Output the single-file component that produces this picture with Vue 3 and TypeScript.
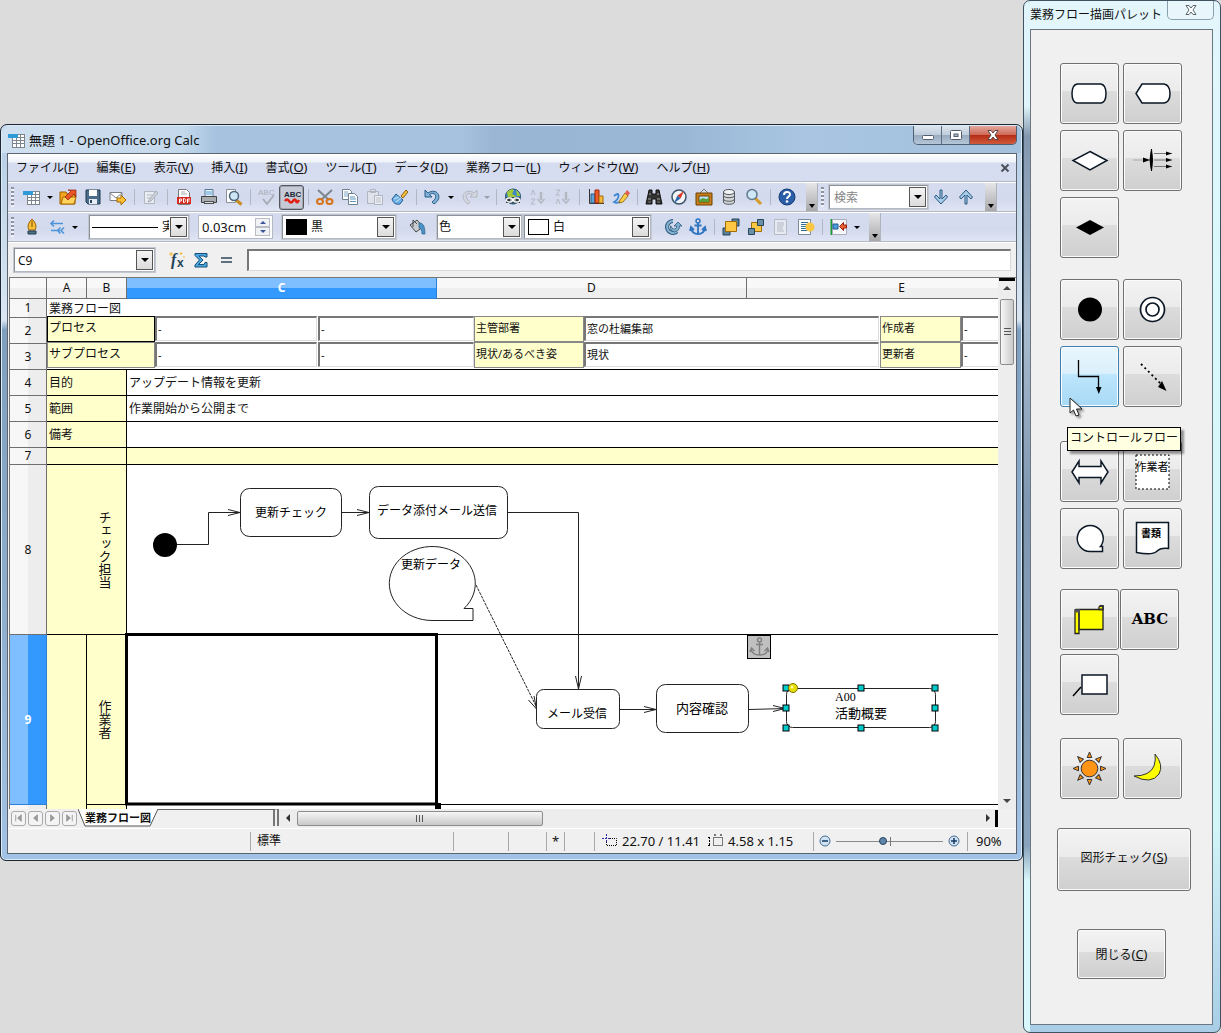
<script setup lang="ts">
import { ref } from 'vue'

interface Tool {
  kind: 'btn' | 'sep' | 'arrow'
  icon?: string
  label?: string
  pressed?: boolean
  disabled?: boolean
}
interface Shape {
  icon: string
  label: string
  hot?: boolean
}

const menus = [
  ['ファイル', 'F'], ['編集', 'E'], ['表示', 'V'], ['挿入', 'I'], ['書式', 'O'],
  ['ツール', 'T'], ['データ', 'D'], ['業務フロー', 'L'], ['ウィンドウ', 'W'], ['ヘルプ', 'H'],
]

const btn = (icon: string, label: string, extra: Partial<Tool> = {}): Tool => ({ kind: 'btn', icon, label, ...extra })
const sep: Tool = { kind: 'sep' }
const arrow = (disabled = false): Tool => ({ kind: 'arrow', label: 'その他', disabled })

const standard: Tool[] = [
  btn('sheet', '新規'), arrow(), btn('open', '開く'), btn('save', '保存'), btn('mail', 'メール送信'), sep,
  btn('edit', '編集', { disabled: true }), sep,
  btn('pdf', 'PDF'), btn('print', '印刷'), btn('preview', 'プレビュー'), sep,
  btn('spell', 'スペルチェック', { disabled: true }), btn('autospell', '自動スペルチェック', { pressed: true }), sep,
  btn('cut', '切り取り'), btn('copy', 'コピー'), btn('paste', '貼り付け', { disabled: true }), btn('brush', '書式の貼り付け'), sep,
  btn('undo', '元に戻す'), arrow(), btn('redo', 'やり直し', { disabled: true }), arrow(true), sep,
  btn('globe', 'ハイパーリンク'), btn('sortAsc', '昇順', { disabled: true }), btn('sortDesc', '降順', { disabled: true }), sep,
  btn('chart', 'グラフ'), btn('draw', '図形描画'), sep,
  btn('binoculars', '検索と置換'), btn('compass', 'ナビゲータ'), btn('gallery', 'ギャラリー'), btn('database', 'データソース'), btn('zoom', 'ズーム'), sep,
  btn('help', 'ヘルプ'),
]
const objectTools: Tool[] = [
  btn('rotate', '回転'), btn('anchor', 'アンカー'), sep,
  btn('front', '最前面へ'), btn('back', '最背面へ'), btn('toFore', '前景へ', { disabled: true }), btn('toBack', '背景へ'), sep,
  btn('align', '配置'), arrow(),
]

const icons: Record<string, string> = {
  sheet: '<path d="M1 3h16v14H4V7H1z" fill="#fff"/><path d="M4.500 6v11M8.500 3v14M12.500 3v14M16.500 3v14M4 6.500h13M4 9.500h13M4 12.500h13M4 16.500h13M8 3.500h9" stroke="#7d858c" fill="none"/><path d="M0 3h10v4H0z" fill="#2e9bd8"/>',
  open: '<path d="M1 4h6l1 2h8v10H1z" fill="#f2a61e" stroke="#9a5c00"/><path d="M4 9h13l-2 7H2z" fill="#ffd35c" stroke="#a86800"/><path d="M6 9l6-6-3-1h8v7l-2-3-6 6z" fill="#e8562a" stroke="#8c1d0c" stroke-width=".7"/>',
  save: '<path d="M2 2h14v14H4l-2-2z" fill="#4b6d8c" stroke="#20384e"/><path d="M5 2h8v6H5z" fill="#fff"/><path d="M5 11h8v5H5z" fill="#e7edf2"/><path d="M6 12h2v3H6z" fill="#29455e"/>',
  mail: '<path d="M1 4.500h12v8H1z" fill="#fff" stroke="#7b8088"/><path d="M1 5l6 5 6-5" fill="none" stroke="#7b8088"/><path d="M8 10h4V7l5 5-5 5v-3H8z" fill="#fbc034" stroke="#a56b00"/>',
  edit: '<path d="M2.500 3.500h10v12h-10zM5 7h5M5 10h5" fill="#e9ecf3" stroke="#b1b6c0"/><path d="M7 12l7-9 2 2-7 8-3 1z" fill="#cfd3dc" stroke="#aab0ba"/>',
  pdf: '<path d="M3.500 1.500h8l3 3v12h-11z" fill="#fff" stroke="#777"/><path d="M6 4h4M6 6h6" stroke="#aaa"/><path d="M2 9h14v7H2z" fill="#d5281e"/><path d="M4.500 15v-4h2v2h-2M8.500 10.500v4c3 0 3-4 0-4M12.500 15v-4h2.500M12.500 13h2" stroke="#fff" fill="none"/>',
  print: '<path d="M5 1.500h8v7H5z" fill="#e9f2fa" stroke="#567a9a"/><path d="M6 4h6M6 6h6" stroke="#5ba2d8"/><path d="M1.500 8.500h15v6h-15z" fill="#a9adb0" stroke="#3f4346"/><path d="M4 13h10v3H4z" fill="#4a4e50"/><path d="M5 14.500h8" stroke="#dfe1e2"/>',
  preview: '<path d="M1.500 1.500h9v13h-9z" fill="#fff" stroke="#8b8f95"/><path d="M10.500 11.500l6 5" stroke="#c88a1c" stroke-width="3"/><circle cx="9" cy="8" r="4.500" fill="#cfe6f5" stroke="#4b657b" stroke-width="1.500"/>',
  spell: '<text x="0" y="7" font-size="8" font-family="Liberation Sans,sans-serif" fill="#a8adb8">ABC</text><path d="M5 11l4 5 7-9" stroke="#a8adb8" stroke-width="2" fill="none"/>',
  autospell: '<text x="1" y="9" font-size="8" font-weight="bold" font-family="Liberation Sans,sans-serif" fill="#1c2733">ABC</text><path d="M2 13q2-3 4 0t4 0 3 0 3-1" stroke="#e02010" stroke-width="2.500" fill="none"/>',
  cut: '<path d="M2 2l11 10M16 2L5 12" stroke="#7d868e" stroke-width="2"/><ellipse cx="4" cy="13.500" rx="3" ry="2.500" fill="none" stroke="#d8731a" stroke-width="2"/><ellipse cx="13.500" cy="13.500" rx="3" ry="2.500" fill="none" stroke="#d8731a" stroke-width="2"/>',
  copy: '<path d="M1.500 1.500h7l2 2v8h-9z" fill="#fff" stroke="#6f8191"/><path d="M3 4h4M3 6h5M3 8h4" stroke="#7fa6c4"/><path d="M7.500 5.500h6l3 3v8h-9z" fill="#fff" stroke="#6f8191"/><path d="M9 9h5M9 11h6M9 13.500h6" stroke="#5b93bd"/>',
  paste: '<path d="M1.500 3.500h11v12h-11zM4.500 1.500h5v3h-5z" fill="#dfe2ea" stroke="#b0b5bf"/><path d="M8.500 7.500h8v9h-8z" fill="#eceef4" stroke="#b0b5bf"/><path d="M10 10h5M10 12h5M10 14h5" stroke="#bbc0c9"/>',
  brush: '<path d="M10 8l5-6 2 2-5 6z" fill="#f3c044" stroke="#8b6009"/><path d="M5 6l7 6-3 4c-4 1-7-1-8-5z" fill="#6db1e4" stroke="#235d91"/><path d="M3 11l5-2M5 14l5-4" stroke="#cbe6fa"/>',
  undo: '<path d="M1 2v7h7L5.500 6.500C11 3 15 9 8 14l2 2C20 10 13-1 4 5z" fill="#7fb0d6" stroke="#2c5d88"/>',
  redo: '<path d="M17 2v7h-7l2.500-2.500C7 3 3 9 10 14l-2 2C-2 10 5-1 14 5z" fill="#d3d7df" stroke="#b1b6c0"/>',
  globe: '<circle cx="9" cy="8.500" r="7.500" fill="#3e86c4" stroke="#234c69"/><path d="M3 4q4-4 7-2l-2 4 4 2-3 3q-6 0-6-7M12 2q4 3 4 6h-3z" fill="#a2cb3c"/><path d="M2 9h14v6H2z" fill="#2c3a40"/><rect x="2.500" y="10" width="6" height="4" rx="2" fill="none" stroke="#fff" stroke-width="1.300"/><rect x="9.500" y="10" width="6" height="4" rx="2" fill="none" stroke="#fff" stroke-width="1.300"/><path d="M6 12h6" stroke="#fff"/>',
  sortAsc: '<path d="M2 7l2-5 2 5M2 11h4l-4 5h4" stroke="#b3b8c2" fill="none"/><path d="M12 4v8" stroke="#b3b8c2" stroke-width="2.500"/><path d="M8.500 11l3.500 4 3.500-4" fill="none" stroke="#b3b8c2" stroke-width="1.500"/>',
  sortDesc: '<path d="M2 2h4L2 7h4M2 16l2-5 2 5" stroke="#b3b8c2" fill="none"/><path d="M12 4v8" stroke="#b3b8c2" stroke-width="2.500"/><path d="M8.500 11l3.500 4 3.500-4" fill="none" stroke="#b3b8c2" stroke-width="1.500"/>',
  chart: '<path d="M2.500 1v14.500H17" stroke="#333" fill="none"/><path d="M4 6h4v9H4z" fill="#5da4d4" stroke="#245a82"/><path d="M8 2h4v13H8z" fill="#ef5b28" stroke="#9c2508"/><path d="M12 8h4v7h-4z" fill="#f8b940" stroke="#a06a08"/>',
  draw: '<path d="M2 8q5-4 4.500 0t-4.500 6q3 2 7-1" stroke="#3f86d2" stroke-width="1.800" fill="none"/><path d="M8 12l5-7 3 3-5 6-4 1z" fill="#f7cf4b" stroke="#a07113"/><path d="M13 5l2-3 3 3-2 3z" fill="#e55f54"/>',
  binoculars: '<path d="M4 2h3v4h4V2h3l1 5 2 9h-6v-5H7v5H1l2-9z" fill="#333" stroke="#111"/><path d="M3 11h3M12 11h3M4 6h2M12 6h2" stroke="#a5a5a5"/><path d="M3 14h3M12 14h3" stroke="#777"/>',
  compass: '<circle cx="9" cy="9" r="7" fill="#f1f5f8" stroke="#3b5368" stroke-width="1.500"/><path d="M14 3l-3.500 7.500-3-3z" fill="#df3521"/><path d="M4 15l3.500-7.500 3 3z" fill="#2a67b0"/>',
  gallery: '<path d="M5 5l4-4 4 4" stroke="#777" fill="none"/><path d="M1 5h16v12H1z" fill="#c47d17" stroke="#6f4204"/><path d="M4 8h10v6H4z" fill="#bfe3f6" stroke="#70470a"/><path d="M4 12l4-2 3 1 3-1v4H4z" fill="#53a03b"/>',
  database: '<path d="M3.500 4v10c0 3 11 3 11 0V4" fill="#d5d8da" stroke="#55595d"/><ellipse cx="9" cy="4" rx="5.500" ry="2.500" fill="#f5f6f7" stroke="#55595d"/><path d="M3.500 7.500c0 3 11 3 11 0M3.500 11c0 3 11 3 11 0" fill="none" stroke="#55595d"/>',
  zoom: '<path d="M10 10l6 6" stroke="#d49a2a" stroke-width="3"/><circle cx="7" cy="6.500" r="5" fill="#cfe8f8" stroke="#61788d" stroke-width="1.500"/>',
  help: '<circle cx="9" cy="9" r="8" fill="#2b5da8" stroke="#173a72"/><path d="M6 7c0-4 6-4 6-.5 0 2-3 2-3 4.500" fill="none" stroke="#fff" stroke-width="2"/><circle cx="9" cy="13.500" r="1.300" fill="#fff"/>',
  pen: '<path d="M9 1q6 6 3 11H6Q3 7 9 1z" fill="#fbc13a" stroke="#9a5f00"/><path d="M9 3v6" stroke="#7a4d00"/><path d="M5 13h8v3H5z" fill="#4f7186" stroke="#233b4c"/>',
  arrows: '<path d="M15 5.500H4M6 2.500L3 5.500l3 3M3 12.500h9M16 9.500l-3 3 3 3M12.500 9.500l-3 3 3 3" stroke="#4d93d9" stroke-width="1.500" fill="none"/>',
  bucket: '<path d="M2 7l7-5 6 7-7 5z" fill="#c9cdd0" stroke="#44494d"/><path d="M5 2v7M5 2l4 4" stroke="#44494d" fill="none"/><path d="M11 5q6-1 6 11h-3q0-6-3-6z" fill="#4b93c6" stroke="#2a5f8a" stroke-width=".7"/>',
  rotate: '<path d="M13 13.500A6 6 0 1 1 9 3" fill="none" stroke="#2e5a7e" stroke-width="4"/><path d="M13 13.500A6 6 0 1 1 9 3" fill="none" stroke="#8ab6d6" stroke-width="2"/><path d="M7 8q1 4 4 3 2-1 1.500-3H10l4-4 4 4h-2.500q0 5-5 6-5-1-4-6z" fill="#7fb0d0" stroke="#2e5a7e" stroke-width=".8"/>',
  anchor: '<circle cx="9" cy="3" r="2" fill="none" stroke="#2f74c0" stroke-width="1.500"/><path d="M9 5v11M5.500 7.500h7M2 10q1 6 7 6t7-6M1 13l1-4 3 3M17 13l-1-4-3 3" fill="none" stroke="#2f74c0" stroke-width="1.800"/>',
  front: '<path d="M10 1h7v7h-7zM1 10h7v7H1z" fill="#5b7f98" stroke="#27445a"/><path d="M3.500 3.500h11v10h-11z" fill="#fdc744" stroke="#a06c07"/>',
  back: '<path d="M4.500 4.500h10v9h-10z" fill="#fdc744" stroke="#a06c07"/><path d="M10.500 1.500h6v6h-6zM1.500 10.500h6v6h-6z" fill="#6a8fa9" stroke="#27445a"/>',
  toFore: '<path d="M2.500 1.500h12v15h-12z" fill="#e6e9f1" stroke="#b4b9c4"/><path d="M5 5h7M5 7h7M5 9h6M5 11h6M5 13h7" stroke="#b4b9c4"/>',
  toBack: '<path d="M1.500 1.500h12v15h-12z" fill="#fff" stroke="#7a8a98"/><path d="M4 4.500h7M4 6.500h7M4 8.500h7M4 10.500h7M4 12.500h7" stroke="#336d92"/><circle cx="13" cy="9" r="4.500" fill="#fdc744"/>',
  align: '<path d="M1.500 1v16" stroke="#1c9a37" stroke-width="2"/><path d="M2.500 1.500h14v15h-14z" fill="#f6f7fa" stroke="#a6aebb"/><path d="M3 6h5v5H3z" fill="#4c9ddf" stroke="#225b90"/><path d="M9.500 8.500l4-4v2.500h3v3h-3v2.500z" fill="#e9663b" stroke="#9b1d08"/>',
  down: '<path d="M8 2h2v9l4-4 1.500 2L9 16 2.500 9 4 7l4 4z" fill="#a9cbe6" stroke="#295a85"/>',
  up: '<path d="M8 16h2V7l4 4 1.500-2L9 2 2.500 9 4 11l4-4z" fill="#a9cbe6" stroke="#295a85"/>',
  fx: '<text x="4" y="14" font-size="16" font-style="italic" font-weight="bold" font-family="Liberation Serif,serif" fill="#1f4257">f</text><text x="10" y="16" font-size="12" font-weight="bold" font-family="Liberation Sans,sans-serif" fill="#1f4257">x</text><path d="M4 1v4M2 3h4M14 1v3M12.500 2.500h3M17 5v2" stroke="#f5b93a"/>',
  sigma: '<path d="M3 2.500h12V6h-2l-1-1H7l4 4-4.500 4.500H12l1-2h2v4.500H3v-2L7.500 9 3 4.500z" fill="#4ba7dd" stroke="#174f79"/>',
  equals: '<path d="M4 7h11M4 11h11" stroke="#2c4657" stroke-width="1.500"/>',
}

const shapes: Record<string, string> = {
  terminal: '<path d="M12 11h24q5 1 5 9.500T36 30H12q-5-1-5-9.500T12 11z" fill="#fff" stroke="#0b1724" stroke-width="1.500"/>',
  display: '<path d="M14 11h22q6 1 6 9.500T36 30H14L8 20.500z" fill="#fff" stroke="#0b1724" stroke-width="1.500"/>',
  decision: '<path d="M25 11.500L42 20.500 25 30 8 20.500z" fill="#fff" stroke="#0b1724" stroke-width="1.500"/>',
  fork: '<path d="M5 20h12" stroke="#aaa"/><path d="M15 17.500l7 2.500-7 2.500z"/><path d="M23.500 9q2 11 0 22-3-11 0-22z" stroke="#000"/><path d="M26 13.500h18M26 20h18M26 26.500h18" stroke="#777"/><path d="M38 11.500l6 2-6 2zM38 18l6 2-6 2zM38 24.500l6 2-6 2z"/>',
  merge: '<path d="M25 13l14 7.500L25 28l-14-7.500z"/>',
  start: '<circle cx="25" cy="20.500" r="12"/>',
  end: '<circle cx="24.500" cy="20.500" r="12" fill="#fff" stroke="#0b1724" stroke-width="1.700"/><circle cx="24.500" cy="20.500" r="6.500" fill="#fff" stroke="#0b1724" stroke-width="1.700"/>',
  control: '<path d="M13.500 4v16.500h20V33" fill="none" stroke="#000" stroke-width="1.300"/><path d="M31 31h5.500l-2.700 7z"/>',
  dataflow: '<path d="M13 8l20 20" stroke="#000" stroke-width="1.800" stroke-dasharray="2 3"/><path d="M30 31l4-6 4.500 10z"/>',
  both: '<path d="M7 21l7-11v5.500h22V10l7 11-7 11v-5.500H14V32z" fill="#fff" stroke="#0b1724" stroke-width="1.500"/>',
  worker: '<path d="M8 4h33v34H8z" fill="#fff" stroke="#000" stroke-dasharray="2 2"/><text x="24" y="20" font-size="11" text-anchor="middle" font-family="Noto Sans CJK JP,sans-serif">作業者</text>',
  data: '<path d="M25 33.500a13 13 0 1 1 10.500-5h2v5z" fill="#fff" stroke="#0b1724" stroke-width="1.500"/>',
  document: '<path d="M8.500 4.500h32v26q-8-1-12 3t-20 1z" fill="#fff" stroke="#0b1724" stroke-width="1.500"/><text x="23" y="19" font-size="10" font-weight="bold" text-anchor="middle" font-family="Noto Sans CJK JP,sans-serif">書類</text>',
  scroll: '<path d="M11 10.500h23V8q2-3 4 0v22.500H14v4h-4V11z" fill="#ff0" stroke="#222" stroke-width="1.300"/><path d="M10 11h4v20M34 10.500h4V7h-3" stroke="#333" fill="none" stroke-width="1.800"/><path d="M10 10.500h5v3h-4z" fill="#555"/>',
  abc: '<text x="25" y="25" font-size="15" font-weight="bold" text-anchor="middle" font-family="DejaVu Serif,serif">ABC</text>',
  note: '<path d="M8 32l8-9" stroke="#000" stroke-width="1.500"/><path d="M17 11h25v19H17z" fill="#fff" stroke="#0b1724" stroke-width="1.500"/>',
  sun: '<circle cx="24.500" cy="20.500" r="8.300" fill="#ff9417" stroke="#333"/>' +
    [0, 45, 90, 135, 180, 225, 270, 315].map((a) => `<path d="M24.500 4l2.300 5.500h-4.600z" fill="#ff9417" stroke="#333" transform="rotate(${a} 24.500 20.500)"/>`).join(''),
  moon: '<path d="M27 6q9 11 4 20-8 11-25 2 16 0 20-10 2-6 1-12z" fill="#ff0" stroke="#333"/>',
}

const groups: { cls: string; items: Shape[] }[] = [
  { cls: 'g-node', items: [
    { icon: 'terminal', label: '活動' }, { icon: 'display', label: '表示' },
    { icon: 'decision', label: '判断' }, { icon: 'fork', label: '分岐' },
    { icon: 'merge', label: '結合' },
  ] },
  { cls: 'g-flow', items: [
    { icon: 'start', label: '開始' }, { icon: 'end', label: '終了' },
    { icon: 'control', label: 'コントロールフロー', hot: true }, { icon: 'dataflow', label: 'データフロー' },
  ] },
  { cls: 'g-data', items: [
    { icon: 'both', label: '双方向' }, { icon: 'worker', label: '担当' },
    { icon: 'data', label: 'データ' }, { icon: 'document', label: '文書' },
  ] },
  { cls: 'g-note', items: [
    { icon: 'scroll', label: '巻物' }, { icon: 'abc', label: '文字' }, { icon: 'note', label: '注釈' },
  ] },
  { cls: 'g-time', items: [{ icon: 'sun', label: '昼' }, { icon: 'moon', label: '夜' }] },
]

const handles = [[786, 688], [861, 688], [935, 688], [786, 708], [935, 708], [786, 728], [861, 728], [935, 728]]
const notes = [['4', '目的', 'アップデート情報を更新'], ['5', '範囲', '作業開始から公開まで'], ['6', '備考', '']]

const navPaths = ['M4 3v7M10 3v7L6 6.500z', 'M9 3v7L5 6.500z', 'M5 3v7l4-3.500z', 'M10 3v7M4 3v7l4-3.500z']

const cellRef = ref('C9')
const formula = ref('')
const search = ref('')
const lineWidth = ref('0.03cm')
const zoomLevel = ref(43)
const process = ref(['-', '-', '窓の杜編集部', '-'])
const subProcess = ref(['-', '-', '現状', '-'])
</script>

<template>
  <div class="desktop">
    <main class="window">
      <header class="titlebar">
        <svg class="ico" viewBox="0 0 18 18" v-html="icons.sheet"></svg>
        <h1>無題 1 - OpenOffice.org Calc</h1>
        <div class="winbtns">
          <button type="button" aria-label="最小化"><svg viewBox="0 0 14 12"><rect x="1.500" y="6.500" width="11" height="4" rx="1" fill="#fff" stroke="#555e6a" /></svg></button>
          <button type="button" aria-label="元に戻す"><svg viewBox="0 0 14 12"><rect x="1.500" y="1.500" width="11" height="9" rx="1" fill="#fff" stroke="#555e6a" /><rect x="5" y="5" width="4" height="2.500" fill="#a9b8ca" stroke="#555e6a" /></svg></button>
          <button type="button" class="x" aria-label="閉じる"><svg viewBox="0 0 14 12"><path d="M2 1.500h3l2 2.500 2-2.500h3L9 6l3 4.500H9L7 8l-2 2.500H2L5 6z" fill="#fff" stroke="#54474b" /></svg></button>
        </div>
      </header>

      <div class="client">
        <nav class="menubar">
          <button v-for="m in menus" :key="m[1]" type="button">{{ m[0] }}<span>(<u>{{ m[1] }}</u>)</span></button>
          <button type="button" class="doc-close" aria-label="文書を閉じる"><svg viewBox="0 0 10 10"><path d="M1.500 1.500l7 7M8.500 1.500l-7 7" stroke="#4c525c" stroke-width="2" /></svg></button>
        </nav>

        <div class="toolbar">
          <div class="bar">
            <i class="grip"></i>
            <template v-for="(t, i) in standard" :key="i">
              <i v-if="t.kind === 'sep'" class="sep"></i>
              <button v-else-if="t.kind === 'arrow'" type="button" class="more" :class="{ off: t.disabled }" :aria-label="t.label"></button>
              <button v-else type="button" class="tool" :class="{ pressed: t.pressed }" :aria-label="t.label"><svg class="ico" viewBox="0 0 18 18" v-html="icons[t.icon!]"></svg></button>
            </template>
            <button type="button" class="overflow" aria-label="標準ツールバーのオプション"></button>
          </div>
          <div class="bar">
            <i class="grip"></i>
            <div class="combo search">
              <input v-model="search" type="text" placeholder="検索" aria-label="検索" />
              <button type="button" class="drop" aria-label="検索履歴"></button>
            </div>
            <button type="button" class="tool" aria-label="次を検索"><svg class="ico" viewBox="0 0 18 18" v-html="icons.down"></svg></button>
            <button type="button" class="tool" aria-label="前を検索"><svg class="ico" viewBox="0 0 18 18" v-html="icons.up"></svg></button>
            <button type="button" class="overflow" aria-label="検索バーのオプション"></button>
          </div>
        </div>

        <div class="toolbar">
          <div class="bar">
            <i class="grip"></i>
            <button type="button" class="tool" aria-label="線"><svg class="ico" viewBox="0 0 18 18" v-html="icons.pen"></svg></button>
            <button type="button" class="tool" aria-label="矢印スタイル"><svg class="ico" viewBox="0 0 18 18" v-html="icons.arrows"></svg></button>
            <button type="button" class="more" aria-label="矢印スタイルの一覧"></button>
            <div class="fields">
              <div class="combo line"><i class="rule"></i><select aria-label="線のスタイル"><option>実線</option></select><i class="drop"></i></div>
              <div class="spin">
                <input v-model="lineWidth" type="text" aria-label="線の幅" />
                <div><button type="button" aria-label="増やす"></button><button type="button" class="dn" aria-label="減らす"></button></div>
              </div>
              <div class="combo ink"><i class="swatch black"></i><select aria-label="線の色"><option>黒</option></select><i class="drop"></i></div>
            </div>
            <button type="button" class="tool" aria-label="領域"><svg class="ico" viewBox="0 0 18 18" v-html="icons.bucket"></svg></button>
            <div class="fields tight">
              <div class="combo kind"><select aria-label="塗りつぶし"><option>色</option></select><i class="drop"></i></div>
              <div class="combo fill"><i class="swatch"></i><select aria-label="塗りつぶし色"><option>白</option></select><i class="drop"></i></div>
            </div>
            <template v-for="(t, i) in objectTools" :key="i">
              <i v-if="t.kind === 'sep'" class="sep"></i>
              <button v-else-if="t.kind === 'arrow'" type="button" class="more" :aria-label="t.label"></button>
              <button v-else type="button" class="tool" :aria-label="t.label"><svg class="ico" viewBox="0 0 18 18" v-html="icons[t.icon!]"></svg></button>
            </template>
            <button type="button" class="overflow" aria-label="図形バーのオプション"></button>
          </div>
        </div>

        <div class="formula">
          <div class="combo name">
            <input v-model="cellRef" type="text" aria-label="名前ボックス" />
            <button type="button" class="drop" aria-label="名前の一覧"></button>
          </div>
          <div class="fbtns">
            <button type="button" class="tool" aria-label="関数ウィザード"><svg class="ico" viewBox="0 0 18 18" v-html="icons.fx"></svg></button>
            <button type="button" class="tool" aria-label="合計"><svg class="ico" viewBox="0 0 18 18" v-html="icons.sigma"></svg></button>
            <button type="button" class="tool" aria-label="関数"><svg class="ico" viewBox="0 0 18 18" v-html="icons.equals"></svg></button>
          </div>
          <input v-model="formula" class="finput" type="text" aria-label="数式入力" />
        </div>

        <div class="sheet">
          <div class="cells">
            <table>
              <colgroup><col class="c-head" /><col class="c-small" /><col class="c-small" /><col /><col /><col /></colgroup>
              <thead>
                <tr><th></th><th>A</th><th>B</th><th class="sel">C</th><th>D</th><th>E</th></tr>
              </thead>
              <tbody>
                <tr class="r1"><th>1</th><td colspan="5">業務フロー図</td></tr>
                <tr class="r26">
                  <th>2</th>
                  <td colspan="5" class="form">
                    <div class="frow">
                      <label class="l1 active" for="p1">プロセス</label>
                      <input id="p1" v-model="process[0]" class="i1" type="text" />
                      <input v-model="process[1]" class="i2" type="text" aria-label="プロセス名" />
                      <label class="l2" for="p3">主管部署</label>
                      <input id="p3" v-model="process[2]" class="i3" type="text" />
                      <label class="l3" for="p4">作成者</label>
                      <input id="p4" v-model="process[3]" class="i4" type="text" />
                    </div>
                  </td>
                </tr>
                <tr class="r26">
                  <th>3</th>
                  <td colspan="5" class="form line-b">
                    <div class="frow">
                      <label class="l1" for="s1">サブプロセス</label>
                      <input id="s1" v-model="subProcess[0]" class="i1" type="text" />
                      <input v-model="subProcess[1]" class="i2" type="text" aria-label="サブプロセス名" />
                      <label class="l2" for="s3">現状/あるべき姿</label>
                      <input id="s3" v-model="subProcess[2]" class="i3" type="text" />
                      <label class="l3" for="s4">更新者</label>
                      <input id="s4" v-model="subProcess[3]" class="i4" type="text" />
                    </div>
                  </td>
                </tr>
                <tr v-for="n in notes" :key="n[0]" class="r26">
                  <th>{{ n[0] }}</th>
                  <td colspan="2" class="y line-b line-r">{{ n[1] }}</td>
                  <td colspan="3" class="line-b">{{ n[2] }}</td>
                </tr>
                <tr class="r7"><th>7</th><td colspan="2" class="y line-b line-r"></td><td colspan="3" class="y line-b"></td></tr>
                <tr class="lane"><th>8</th><td class="y line-b"></td><td class="y line-b line-r vert"><span>チェック担当</span></td><td colspan="3" class="line-b"></td></tr>
                <tr class="lane"><th class="sel">9</th><td class="y line-r"></td><td class="y line-b line-r vert"><span>作業者</span></td><td colspan="3" class="line-b"></td></tr>
                <tr class="tail"><th></th><td class="y line-r"></td><td class="y line-r"></td><td colspan="3"></td></tr>
              </tbody>
            </table>

            <svg class="diagram" role="img" aria-label="業務フロー">
              <g transform="translate(-10 -278)" fill="none" stroke="#222">
                <rect x="126.500" y="634.500" width="310" height="169.500" stroke="#000" stroke-width="3" />
                <rect x="435" y="803" width="6" height="6" fill="#000" stroke="none" />
                <circle cx="165" cy="545" r="12" fill="#000" stroke="none" />
                <path d="M177 544.500h31.500v-32H240M228 509.500l12 3-12 3M342 512.500h27M357 509.500l12 3-12 3M508 512.500h70.500V689M575.500 676l3 13 3-13M620 709.500h36M644 706.500l12 3-12 3M749 709.500l37-1M773 705.500l12 3-12 3" />
                <rect x="240.500" y="488.500" width="101" height="48" rx="9" fill="#fff" />
                <rect x="369.500" y="486.500" width="138" height="52" rx="9" fill="#fff" />
                <path d="M432 620.500A43 37 0 1 1 464 608.500H473V620.500z" />
                <path d="M476 585l61 123" stroke-dasharray="3 1" />
                <path d="M534 696l2.500 13-8-9" />
                <rect x="536.500" y="689.500" width="83" height="39" rx="7" fill="#fff" />
                <rect x="656.500" y="684.500" width="92" height="48" rx="9" fill="#fff" />
                <rect x="786.500" y="688.500" width="149" height="39" rx="6" fill="#fff" />
                <g fill="#000" stroke="none" class="dtext">
                  <text x="291" y="517" text-anchor="middle">更新チェック</text>
                  <text x="437" y="515" text-anchor="middle">データ添付メール送信</text>
                  <text x="431" y="569" text-anchor="middle">更新データ</text>
                  <text x="577" y="718" text-anchor="middle">メール受信</text>
                  <text x="702" y="713" text-anchor="middle" class="wide">内容確認</text>
                  <text x="835" y="718" class="wide">活動概要</text>
                  <text x="835" y="701" class="serif">A00</text>
                </g>
                <rect v-for="h in handles" :key="h.join()" :x="h[0] - 3" :y="h[1] - 3" width="6" height="6" fill="#0cc" stroke="#000" />
                <circle cx="793" cy="688" r="4.500" fill="#e6dc00" stroke="#7c7600" />
                <circle cx="792" cy="687" r="1.500" fill="#fff9a0" stroke="none" />
                <rect x="747.500" y="635.500" width="23" height="23" fill="#c0c0c0" stroke="#000" />
                <path d="M759.500 642v13M756 644.500h7M751 649q1 6 8.500 6t8.500-6M750 652l1.500-4 3 3M769 652l-1.500-4-3 3" stroke="#808080" stroke-width="1.500" />
                <circle cx="759.500" cy="640" r="2" stroke="#808080" stroke-width="1.500" />
              </g>
            </svg>
          </div>
          <div class="vscroll">
            <i class="split"></i><i class="tri up"></i><i class="thumb"></i><i class="tri dn"></i>
          </div>
        </div>

        <div class="tabs">
          <div class="nav">
            <button v-for="(p, i) in navPaths" :key="i" type="button" :aria-label="['最初', '前', '次', '最後'][i]"><svg viewBox="0 0 14 13"><path :d="p" fill="#9a9a9a" stroke="#9a9a9a" /></svg></button>
          </div>
          <button type="button" class="tab"><svg viewBox="0 0 80 18"><path d="M0 0L7 17H72L80 0" fill="#fff" stroke="#555" /></svg><span>業務フロー図</span></button>
          <div class="tabspace"></div>
          <div class="hscroll"><i class="tri lf"></i><i class="thumb"></i><i class="fillup"></i><i class="tri rt"></i><i class="split"></i></div>
        </div>

        <footer class="status">
          <span class="s-page"></span><span class="s-style">標準</span><span class="s-mode"></span><span class="s-ins"></span><span class="s-mod">*</span><span class="s-sig"></span>
          <span class="s-pos">
            <svg viewBox="0 0 16 14"><path d="M4.500 0v8M0 4.500h8" stroke="#2c2ca8" stroke-dasharray="2 1" /><path d="M8 4.500h6.500v7h-10V8" stroke="#000" fill="none" stroke-dasharray="1 1" /></svg>
            <b>22.70 / 11.41</b>
            <svg viewBox="0 0 16 14"><path d="M5.500 3.500h9v8h-9z" stroke="#000" fill="none" stroke-dasharray="1 1" /><path d="M1.500 3v9M0 3.500h3M0 11.500h3M6 1h2M12 1h2" stroke="#000" stroke-dasharray="2 1" /></svg>
            <b>4.58 x 1.15</b>
          </span>
          <span class="s-zoom">
            <button type="button" aria-label="縮小"><svg viewBox="0 0 12 12"><circle cx="6" cy="6" r="5" fill="#cfe3f5" stroke="#476d92" /><path d="M3 6h6" stroke="#153a60" stroke-width="1.500" /></svg></button>
            <input v-model="zoomLevel" type="range" min="0" max="100" aria-label="ズーム" />
            <button type="button" aria-label="拡大"><svg viewBox="0 0 12 12"><circle cx="6" cy="6" r="5" fill="#cfe3f5" stroke="#476d92" /><path d="M3 6h6M6 3v6" stroke="#153a60" stroke-width="1.500" /></svg></button>
          </span>
          <span class="s-pct">90%</span>
        </footer>
      </div>
    </main>

    <aside class="palette">
      <header>
        <h2>業務フロー描画パレット</h2>
        <button type="button" aria-label="閉じる"><svg viewBox="0 0 14 12"><path d="M2 1.500h3l2 2.500 2-2.500h3L9 6l3 4.500H9L7 8l-2 2.500H2L5 6z" fill="#fff" stroke="#59646c" /></svg></button>
      </header>
      <div class="pbody">
        <div v-for="g in groups" :key="g.cls" class="group" :class="g.cls">
          <div v-for="s in g.items" :key="s.icon" class="slot">
            <button type="button" class="shape" :class="{ hot: s.hot }" :aria-label="s.label"><svg viewBox="0 0 50 42" v-html="shapes[s.icon]"></svg></button>
            <template v-if="s.hot">
              <svg class="cursor" viewBox="0 0 14 20"><path d="M1 1v15l3.500-3 2.500 6 3-1-2.500-6H13z" fill="#fff" stroke="#222" /></svg>
              <span class="tip" role="tooltip">{{ s.label }}</span>
            </template>
          </div>
        </div>
        <button type="button" class="shape check">図形チェック<span>(<u>S</u>)</span></button>
        <button type="button" class="shape close">閉じる<span>(<u>C</u>)</span></button>
      </div>
    </aside>
  </div>
</template>

<style>
body { margin: 0; background: #dcdcdc; }
</style>

<style scoped>
* { box-sizing: border-box; }
.desktop {
  display: flex;
  align-items: flex-start;
  min-height: 100vh;
  background: #dcdcdc;
  color: #111;
  font: 12px/16px "Noto Sans", "Noto Sans CJK JP", sans-serif;
}
button, input, select { font: inherit; color: inherit; margin: 0; padding: 0; border: 0; background: none; border-radius: 0; outline: 0; min-width: 0; }
i { display: block; flex: none; }
h1, h2 { margin: 0; font-weight: normal; }
svg { display: block; }
.ico { width: 18px; height: 18px; }

.window {
  flex: 1;
  min-width: 0;
  margin-top: 124px;
  padding: 0 5px 6px 6px;
  border: 1px solid #1d2733;
  border-radius: 7px 7px 6px 6px;
  background: linear-gradient(#a9c4df 0, #b9d0e6 28px, #dbe6f2 195px, #7f9fbf 205px, #8fafcf 500px, #a3c3e6 100%);
  box-shadow: inset 0 0 0 1px #dcebf8;
}
.titlebar {
  display: flex;
  align-items: center;
  height: 27px;
  margin: 1px -4px 0 -5px;
  padding-left: 6px;
  border-radius: 6px 6px 0 0;
  background: linear-gradient(90deg, #cfe0f0 0, #c5d9ec 180px, #a6c2df 215px, #a6c2df 460px, #9ab6d4 490px, #9ab7d6 680px, #a9c5e1 800px, #a3c0dd 100%);
}
.titlebar h1 { flex: 1; margin-left: 3px; font-size: 13px; line-height: 20px; }
.winbtns { display: flex; align-self: flex-start; margin-right: 4px; border: 1px solid #4f5e70; border-top: 0; border-radius: 0 0 5px 5px; overflow: hidden; }
.winbtns button { display: grid; place-items: center; width: 28px; height: 18px; background: linear-gradient(#dbe5ef, #c0cddb 48%, #98abc0 52%, #b5c6d8); border-right: 1px solid #5d6c7f; }
.winbtns .x { width: 46px; border: 0; background: linear-gradient(#e3a79c, #cf6a58 48%, #b62c16 52%, #cf5a3c); }
.winbtns svg { width: 14px; height: 12px; }

.client { border: 1px solid #5c6470; background: #f0f0f0; }
.menubar {
  display: flex;
  align-items: center;
  gap: 18px;
  height: 28px;
  padding: 0 6px 0 8px;
  border-bottom: 1px solid #b4b8c2;
  background: linear-gradient(#fff, #eff2fa 8px, #d5dcef 9px, #d6ddf0);
  white-space: nowrap;
}
.menubar span, .check span, .close span { font-size: 13px; }
.doc-close { margin-left: auto; }
.doc-close svg { width: 10px; height: 10px; }

.toolbar { display: flex; height: 30px; border-top: 1px solid #fff; border-bottom: 1px solid #b4b8c2; background: linear-gradient(#d5dcef, #d3daed 60%, #e0e5f4); }
.bar { display: flex; align-items: center; border-right: 1px solid #b0b4be; }
.grip { width: 3px; height: 20px; margin: 0 5px 0 3px; background: repeating-linear-gradient(#8d93a0 0 2px, #eef1f9 2px 4px); }
.tool { display: grid; place-items: center; flex: none; width: 25px; height: 25px; }
.tool.pressed { border: 1px solid #53555a; border-radius: 3px; background: #c6cad6; box-shadow: inset 0 0 0 1px #a3a7b2; }
.sep { width: 8px; height: 16px; background: linear-gradient(#b2b7c4, #b2b7c4) 4px 0 / 1px 100% no-repeat; }
.more { display: grid; place-items: center; flex: none; width: 11px; height: 24px; }
.more::after { content: ""; border: solid transparent; border-width: 3px 3px 0; border-top-color: #000; }
.more.off::after { border-top-color: #9a9fa9; }
.overflow { align-self: stretch; display: flex; align-items: flex-end; justify-content: center; width: 11px; margin-left: 7px; padding-bottom: 3px; background: linear-gradient(#e6e6e8, #a9a9ab); }
.overflow::after { content: ""; border: solid transparent; border-width: 4px 3px 0; border-top-color: #000; }

.combo { display: flex; align-items: center; height: 24px; border: 1px solid #8b8f98; border-right-color: #b4b8c0; border-bottom-color: #b4b8c0; background: #fff; box-shadow: 0 0 0 1px #c3c7d0; }
.combo input, .combo select { flex: 1; width: 0; height: 20px; padding: 0 4px; appearance: none; }
.combo .drop { display: grid; place-items: center; flex: none; align-self: stretch; width: 17px; margin: 1px; border: 1px solid #555; background: linear-gradient(#f4f4f4, #dcdcdc); }
.drop::after { content: ""; border: solid transparent; border-width: 4px 4px 0; border-top-color: #000; }
.search { width: 99px; }
.search input::placeholder { color: #868686; opacity: 1; }
.fields { display: flex; gap: 9px; margin: 0 8px 0 9px; }
.fields.tight { gap: 2px; margin: 0 9px 0 8px; }
.line { width: 100px; }
.line .rule { width: 66px; height: 1px; margin-left: 2px; background: #000; }
.line select { padding: 0 0 0 4px; }
.ink { width: 114px; }
.kind { width: 85px; }
.kind select { padding-left: 1px; }
.fill { width: 127px; }
.swatch { width: 21px; height: 16px; margin-left: 3px; border: 1px solid #000; }
.swatch.black { background: #000; }
.spin { display: flex; align-items: center; width: 75px; height: 24px; padding-left: 3px; border: 1px solid #b4b9c4; background: #fff; font-size: 13px; }
.spin input { flex: 1; width: 0; height: 20px; }
.spin div { display: flex; flex-direction: column; margin-right: 2px; }
.spin button { display: grid; place-items: center; width: 15px; height: 9px; border: 1px solid #b9bdc6; background: #f1f2f6; }
.spin button::after { content: ""; border: solid transparent; border-width: 0 3px 3px; border-bottom-color: #3b5397; }
.spin .dn::after { border-width: 3px 3px 0; border-top-color: #3b5397; }

.formula { display: flex; align-items: center; height: 35px; padding: 0 5px 0 6px; border-top: 1px solid #fff; }
.name { width: 141px; }
.name input { padding-left: 3px; }
.name + .fbtns { display: flex; margin: 0 9px 0 8px; }
.finput { flex: 1; height: 22px; padding: 0 4px; border: 1px solid #d9d9d9; border-top: 2px solid #777; border-left: 2px solid #777; background: #fff; }

.sheet { display: flex; margin-left: 1px; border-top: 1px solid #777; border-left: 1px solid #777; }
.cells { position: relative; flex: 1; min-width: 0; overflow: hidden; background: #fff; }
table { width: 1047px; table-layout: fixed; border-collapse: separate; border-spacing: 0; }
.c-head { width: 37px; }
.c-small { width: 40px; }
th, td { padding: 0; }
th { font-weight: normal; text-align: center; border-right: 1px solid #6f6f6f; border-bottom: 1px solid #6f6f6f; background: linear-gradient(90deg, #f7f7f7 50%, #ededed 50%); }
thead tr { height: 21px; }
thead th { background: linear-gradient(#f8f8f8 50%, #efefef 50%); line-height: 18px; }
thead .sel { background: linear-gradient(#7fbeff 50%, #3399ff 50%); color: #fff; font-weight: bold; border-color: #2b7fd6; }
tbody .sel { background: linear-gradient(90deg, #7fbeff 50%, #3399ff 50%); color: #fff; font-weight: bold; border-color: #2b7fd6; }
tbody td { padding-left: 2px; }
.r1 { height: 19px; }
.r1 td { line-height: 16px; }
.r26 { height: 26px; }
.r7 { height: 17px; line-height: 14px; }
.lane { height: 170px; }
.tail { height: 4px; }
.tail th { border-bottom: 0; }
.y { background: #ffffcc; }
.line-b { border-bottom: 1px solid #000; }
.line-r { border-right: 1px solid #000; }
tbody .vert { padding: 0 4px 0 0; }
.vert span { display: block; margin: 0 auto; writing-mode: vertical-rl; font-size: 13px; line-height: 16px; }
tbody td.form { padding: 0; vertical-align: top; height: 26px; }
.frow { display: flex; height: 25px; margin-top: -2px; font-size: 11px; }
td.form.line-b .frow { margin-bottom: 1px; }
.frow label { height: 26px; padding-left: 1px; line-height: 22px; border: 1px solid #888; background: #ffffcc; flex: none; }
.frow .active { border-color: #000; }
.frow input { height: 25px; padding: 0 2px 2px 1px; border: 1px solid #ddd; border-top: 2px solid #777; border-left: 2px solid #777; background: #fff; flex: none; }
.frow .l1 { width: 108px; font-size: 12px; }
.frow .i1 { width: 162px; margin-right: 1px; }
.frow .i2 { width: 156px; }
.frow .l2 { width: 110px; }
.frow .i3 { width: 295px; margin-right: 1px; }
.frow .l3 { width: 81px; }
.frow .i4 { flex: 1; }
.diagram { position: absolute; inset: 0; width: 100%; height: 100%; pointer-events: none; }
.dtext { font: 12px "Noto Sans CJK JP", sans-serif; }
.dtext .wide { font-size: 13px; }
.dtext .serif { font: 12px "Liberation Serif", serif; }

.vscroll { display: flex; flex-direction: column; align-items: center; width: 18px; background: #ededed; }
.vscroll .split { width: 16px; height: 3px; background: #000; }
.tri { border: 4px solid transparent; }
.tri.up { margin-top: 5px; border-width: 0 4px 4px; border-bottom-color: #444; }
.tri.dn { margin: auto 0 6px; border-width: 4px 4px 0; border-top-color: #444; }
.vscroll .thumb { width: 14px; height: 66px; margin-top: 9px; border: 1px solid #8d8d8d; border-radius: 2px; background: repeating-linear-gradient(#555 0 1px, transparent 1px 3px) center / 7px 8px no-repeat, linear-gradient(90deg, #f5f5f5, #e0e0e0 50%, #c9c9c9); }

.tabs { display: flex; align-items: flex-start; height: 20px; border-bottom: 1px solid #fff; }
.nav { display: flex; gap: 2px; padding: 2px 0 0 3px; }
.nav button { width: 15px; height: 15px; border: 1px solid #aaa; border-radius: 3px; background: #f4f4f4; }
.tab { position: relative; width: 80px; height: 18px; margin-left: 1px; font-size: 11px; font-weight: bold; line-height: 17px; white-space: nowrap; }
.tab svg { width: 80px; height: 18px; }
.tab span { position: absolute; inset: 0; text-align: center; }
.tabspace { width: 121px; height: 17px; border-top: 1px solid #666; border-right: 6px double #777; }
.hscroll { display: flex; align-items: center; flex: 1; height: 18px; margin-right: 18px; background: #ededed; }
.tri.lf { margin: 0 7px 0 7px; border-width: 4px 4px 4px 0; border-right-color: #333; }
.tri.rt { margin-right: 5px; border-width: 4px 0 4px 4px; border-left-color: #333; }
.hscroll .thumb { width: 246px; height: 15px; border: 1px solid #8d8d8d; border-radius: 2px; background: repeating-linear-gradient(90deg, #555 0 1px, transparent 1px 3px) center / 8px 7px no-repeat, linear-gradient(#f5f5f5, #e0e0e0 50%, #c9c9c9); }
.fillup { flex: 1; }
.hscroll .split { width: 3px; height: 17px; background: #000; }

.status { display: flex; align-items: center; height: 24px; }
.status > span { display: flex; align-items: center; flex: none; height: 19px; border-right: 1px solid #a8a8a8; }
.status .s-page { width: 243px; }
.status .s-style { width: 203px; padding-left: 6px; }
.status .s-mode { width: 55px; }
.status .s-ins { width: 38px; }
.status .s-mod { width: 18px; justify-content: center; font-size: 13px; }
.status .s-sig { width: 30px; }
.status .s-pos { flex: 1; gap: 4px; padding-left: 7px; }
.s-pos b { font-weight: normal; font-size: 13px; white-space: nowrap; }
.s-pos svg { width: 16px; height: 14px; flex: none; }
.s-pos b + svg { margin-left: 4px; }
.status .s-zoom { width: 154px; padding-left: 5px; }
.s-zoom svg { width: 12px; height: 12px; }
.s-zoom input { flex: 1; width: 0; height: 12px; margin: 0 5px; appearance: none; background: linear-gradient(#777, #777) 54px 2px / 1px 9px no-repeat, linear-gradient(#8b8b8b, #8b8b8b) 0 6px / 100% 1px no-repeat; }
.s-zoom input::-webkit-slider-thumb { appearance: none; width: 8px; height: 8px; border: 1px solid #26425e; border-radius: 50%; background: #5f86ab; }
.s-zoom button:last-child { margin-right: 7px; }
.status .s-pct { width: 48px; padding-left: 8px; border: 0; font-size: 13px; }

.palette {
  flex: none;
  width: 198px;
  padding: 0 7px 7px 6px;
  border: 1px solid #3f5260;
  border-radius: 7px;
  background:
    linear-gradient(#dff5fb 0, #dff5fb 105px, #8397af 135px, #a9bccf 325px, #7f97b1 500px, #8aa3bd 830px, #8aa3bd 845px, #d9f8fb 880px, #d9f8fb 100%) 0 0 / 6px 100% no-repeat,
    linear-gradient(#e3f6fc, #d7f9fb 30%, #d2f5f8 80%, #a9cde6);
}
.palette header { display: flex; align-items: flex-start; height: 28px; margin-right: -1px; }
.palette h2 { flex: 1; padding-top: 5px; font-size: 12px; line-height: 18px; white-space: nowrap; }
.palette header button { display: grid; place-items: center; width: 47px; height: 19px; border: 1px solid #8aa0ad; border-top: 0; border-radius: 0 0 5px 5px; background: #e9f7fc; }
.palette header svg { width: 14px; height: 12px; }
.pbody { display: flex; flex-direction: column; align-items: center; padding: 33px 0 45px; border: 1px solid #6a7780; background: #f0f0f0; }
.group { display: flex; flex-wrap: wrap; gap: 6px 4px; width: 124px; margin-bottom: 20px; align-self: flex-start; margin-left: 29px; }
.g-node { margin-bottom: 21px; }
.g-flow { margin-bottom: 34px; }
.g-note { gap: 4px 1px; margin-bottom: 23px; }
.g-time { margin-bottom: 29px; }
.slot { position: relative; }
.shape { border: 1px solid #707070; border-radius: 3px; background: linear-gradient(#f3f3f3, #ebebeb 46%, #dcdcdc 46%, #cfcfcf); box-shadow: inset 0 0 0 1px #fbfbfb; }
.slot .shape { display: grid; place-items: center; width: 59px; height: 61px; }
.slot .shape svg { width: 50px; height: 42px; }
.slot .hot { border-color: #3c7fb1; background: linear-gradient(#eaf6fd, #d9f0fc 46%, #bee6fd 46%, #a7d9f5); }
.check { width: 134px; height: 63px; margin: 0 0 38px 5px; padding-bottom: 4px; }
.close { width: 89px; height: 50px; }
.cursor { position: absolute; z-index: 2; left: 9px; top: 51px; width: 14px; height: 20px; filter: drop-shadow(2px 2px 1px #0006); }
.tip { position: absolute; z-index: 2; left: 7px; top: 81px; width: 114px; height: 24px; padding-left: 2px; border: 1px solid #000; background: #ffffe1; line-height: 20px; white-space: nowrap; box-shadow: 3px 3px 2px #0006; }
</style>
